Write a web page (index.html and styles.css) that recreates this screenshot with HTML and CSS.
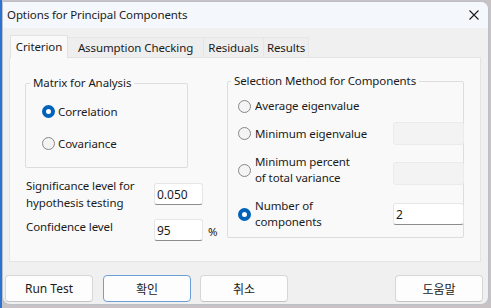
FILE: index.html
```html
<!DOCTYPE html>
<html lang="ko">
<head>
    <meta charset="UTF-8">
    <title>Options for Principal Components</title>
    <link rel="stylesheet" href="styles.css">
</head>
<body>
    <div class="window">
        <div class="titlebar">
            <span class="title">Options for Principal Components</span>
            <svg class="close" width="10" height="10" viewBox="0 0 10 10">
                <path d="M0.5 0.5 L9.5 9.5 M9.5 0.5 L0.5 9.5" stroke="#1a1a1a" stroke-width="1.1" fill="none"/>
            </svg>
        </div>

        <!-- タブ -->
        <div class="tabs">
            <div class="tab active tab-criterion">Criterion</div>
            <div class="tab tab-assumption">Assumption Checking</div>
            <div class="tab tab-residuals">Residuals</div>
            <div class="tab tab-results">Results</div>
        </div>

        <div class="pane">
            <div class="left-col">
                <div class="group group-matrix">
                    <div class="group-title">Matrix for Analysis</div>
                    <label class="radio-row first">
                        <input type="radio" name="matrix" checked>
                        <span>Correlation</span>
                    </label>
                    <label class="radio-row second">
                        <input type="radio" name="matrix">
                        <span>Covariance</span>
                    </label>
                </div>

                <div class="field-row sig-row">
                    <div class="field-label">Significance level for<br>hypothesis testing</div>
                    <input class="textbox" type="text" value="0.050">
                </div>
                <div class="field-row conf-row">
                    <div class="field-label">Confidence level</div>
                    <input class="textbox" type="text" value="95">
                    <span class="unit">%</span>
                </div>
            </div>

            <div class="group group-selection">
                <div class="group-title">Selection Method for Components</div>
                <div class="sel-row sel-average">
                    <input type="radio" name="sel">
                    <span>Average eigenvalue</span>
                </div>
                <div class="sel-row sel-mineigen">
                    <input type="radio" name="sel">
                    <span>Minimum eigenvalue</span>
                    <input class="textbox box-right" type="text" disabled>
                </div>
                <div class="sel-row sel-percent">
                    <input type="radio" name="sel">
                    <span>Minimum percent<br>of total variance</span>
                    <input class="textbox box-right" type="text" disabled>
                </div>
                <div class="sel-row sel-number">
                    <input type="radio" name="sel" checked>
                    <span>Number of<br>components</span>
                    <input class="textbox box-right" type="text" value="2">
                </div>
            </div>
        </div>

        <div class="buttons">
            <button class="btn btn-run">Run Test</button>
            <button class="btn btn-ok">확인</button>
            <button class="btn btn-cancel">취소</button>
            <button class="btn btn-help">도움말</button>
        </div>
    </div>
</body>
</html>
```

FILE: styles.css
```css
* {
    box-sizing: border-box;
}
body {
    margin: 0;
    height: 308px;
    overflow: hidden;
    background: linear-gradient(to right, #2c72d2 0, #2c72d2 2px, #c8c2c4 2px);
    font-family: "Noto Sans", "Noto Sans CJK KR", sans-serif;
    font-size: 11.5px;
    letter-spacing: -0.1px;
    color: #1b1b1b;
}
.window {
    margin: 1px 0 0 2px;
    width: 487px;
    height: 304px;
    border: 1px solid #b9c0ca;
    border-radius: 0 8px 8px 8px;
    background-color: #f0f0f0;
    overflow: hidden;
    display: flex;
    flex-direction: column;
}
.titlebar {
    height: 26px;
    display: flex;
    align-items: center;
    padding-left: 4px;
    background-color: #f4f7fb;
}
.title {
    flex: 1;
    line-height: 16px;
}
.close {
    margin-right: 9px;
    display: block;
}

/* タブ */
.tabs {
    display: flex;
    align-items: flex-end;
    height: 23px;
    margin: 7px 0 0 7px;
    position: relative;
    z-index: 1;
}
.tab {
    height: 20px;
    margin-bottom: 1px;
    line-height: 19px;
    text-align: center;
    background-color: #eeeeee;
    border: 1px solid #e6e6e6;
    border-bottom: none;
    border-left: none;
}
.tab.active {
    height: 23px;
    margin-bottom: 0;
    line-height: 21px;
    background-color: #f9f9f9;
    border: 1px solid #e2e2e2;
    border-bottom: none;
}
.tab-criterion { width: 58px; }
.tab-assumption { width: 136px; }
.tab-residuals { width: 60px; }
.tab-results { width: 45px; }

.pane {
    margin: -1px 7px 0 6px;
    height: 205px;
    border: 1px solid #e4e4e4;
    background-color: #f9f9f9;
    display: flex;
    align-items: flex-start;
}
.left-col {
    flex: none;
    width: 200px;
    margin-left: 15px;
}
.group {
    border: 1px solid #dddddd;
    border-radius: 2px;
}
.group-title {
    width: fit-content;
    line-height: 16px;
    padding: 0 3px;
    background-color: #f9f9f9;
    margin-top: -9px;
}
.group-matrix {
    width: 163px;
    height: 85px;
    margin-top: 25px;
}
.group-matrix .group-title {
    margin-left: 4px;
}
.radio-row {
    display: flex;
    align-items: center;
    height: 16px;
    padding-left: 16px;
}
.radio-row.first { margin-top: 12px; }
.radio-row.second { margin-top: 16px; }

input[type="radio"] {
    appearance: none;
    flex: none;
    width: 13px;
    height: 13px;
    margin: 0 3px 0 0;
    border: 1px solid #878787;
    border-radius: 50%;
    background-color: #f4f4f4;
}
input[type="radio"]:checked {
    border: 4px solid #0062b8;
    background-color: #fff;
}

.field-row {
    display: flex;
    align-items: center;
    padding-left: 1px;
}
.field-label {
    flex: none;
    width: 128px;
    line-height: 17px;
}
.sig-row { margin-top: 9px; }
.conf-row { margin-top: 7px; }
.conf-row .field-label { margin-bottom: 7px; }
.unit {
    margin-left: 5px;
    padding-top: 3px;
}
.textbox {
    flex: none;
    width: 49px;
    height: 22px;
    padding: 0 0 0 2px;
    border: 1px solid #e6e6e6;
    border-bottom-color: #8c8c8c;
    border-radius: 3px;
    background-color: #fff;
    font-family: inherit;
    font-size: 12px;
    color: #1b1b1b;
    outline: none;
}
.textbox:disabled {
    background-color: #f3f3f3;
    border-color: #ebebeb;
}

.group-selection {
    flex: none;
    width: 237px;
    height: 157px;
    margin: 23px 0 0 2px;
}
.group-selection .group-title {
    margin-left: 3px;
}
.sel-row {
    display: flex;
    align-items: center;
    padding-left: 10px;
    line-height: 16px;
}
.sel-row span {
    margin-left: 1px;
}
.box-right {
    width: 71px;
    height: 23px;
    margin: 0 -1px 0 auto;
}
.sel-average { height: 16px; margin-top: 9px; }
.sel-mineigen { height: 23px; margin-top: 8px; }
.sel-percent { height: 32px; margin-top: 9px; }
.sel-percent .box-right {
    align-self: flex-start;
    margin-top: 8px;
}
.sel-number { height: 32px; margin-top: 12px; }
.sel-number .box-right { height: 22px; }

.buttons {
    display: flex;
    margin-top: 13px;
    padding: 0 5px 0 2px;
}
.btn {
    width: 88px;
    height: 27px;
    border: 1px solid #d6d6d6;
    border-bottom-color: #c4c4c4;
    border-radius: 4px;
    background-color: #fdfdfd;
    font-family: inherit;
    font-size: 12px;
    color: #1b1b1b;
    padding: 0;
}
.btn-ok {
    margin-left: 10px;
    border-color: #6a9fd8;
}
.btn-cancel { margin-left: 9px; }
.btn-help { margin-left: auto; }
```
